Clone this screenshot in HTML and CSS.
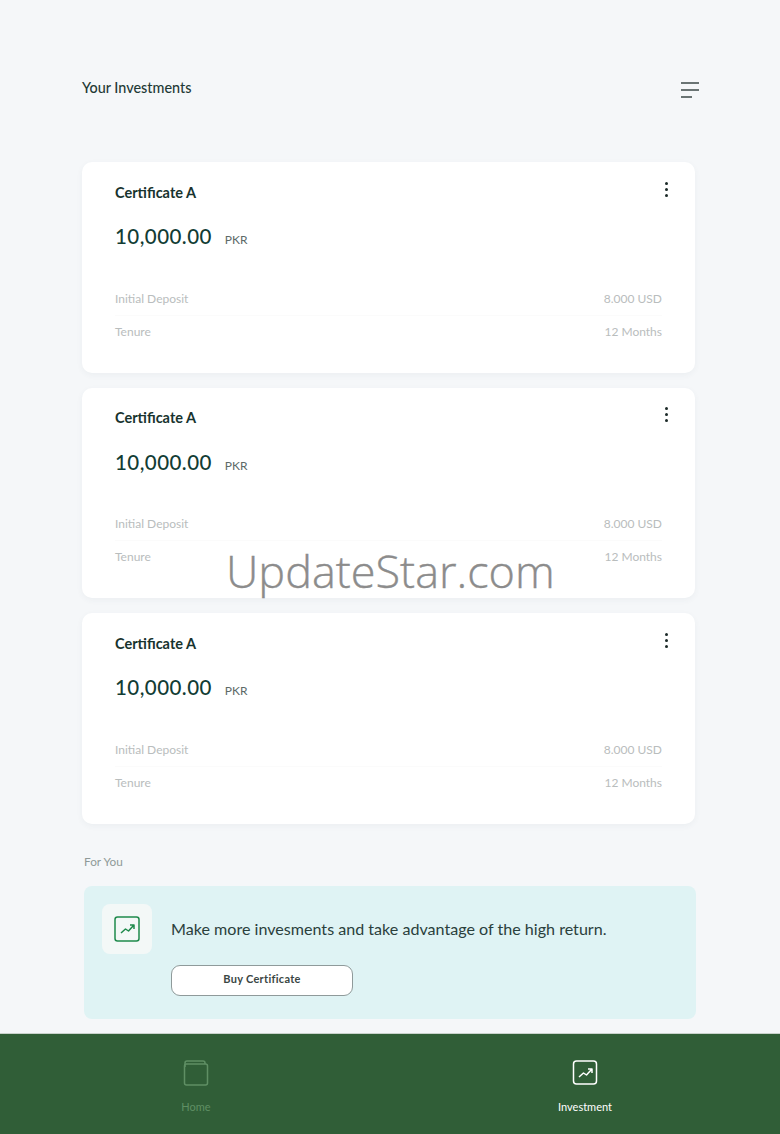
FILE: index.html
```html
<!DOCTYPE html>
<html lang="en">
  <head>
    <meta charset="UTF-8" />
    <meta name="viewport" content="width=device-width, initial-scale=1.0" />
    <title>Your Investments</title>
    <link rel="stylesheet" href="styles.css">
  </head>
  <body>
    <div class="page">
      <main class="content">
        <header class="top">
          <h1>Your Investments</h1>
          <svg class="menu" width="18" height="16" viewBox="0 0 18 16">
            <path d="M0 1h18M0 8h18M0 15h11" stroke="#3d4a48" stroke-width="1.4" fill="none" />
          </svg>
        </header>

        <div class="cards">
          <section class="card">
            <div class="card-head">
              <h2>Certificate A</h2>
              <span class="dots"><i></i><i></i><i></i></span>
            </div>
            <div class="amount"><strong>10,000.00</strong><span>PKR</span></div>
            <div class="row"><span>Initial Deposit</span><span>8.000 USD</span></div>
            <div class="row"><span>Tenure</span><span>12 Months</span></div>
          </section>
          <section class="card">
            <div class="card-head">
              <h2>Certificate A</h2>
              <span class="dots"><i></i><i></i><i></i></span>
            </div>
            <div class="amount"><strong>10,000.00</strong><span>PKR</span></div>
            <div class="row"><span>Initial Deposit</span><span>8.000 USD</span></div>
            <div class="row"><span>Tenure</span><span>12 Months</span></div>
          </section>
          <section class="card">
            <div class="card-head">
              <h2>Certificate A</h2>
              <span class="dots"><i></i><i></i><i></i></span>
            </div>
            <div class="amount"><strong>10,000.00</strong><span>PKR</span></div>
            <div class="row"><span>Initial Deposit</span><span>8.000 USD</span></div>
            <div class="row"><span>Tenure</span><span>12 Months</span></div>
          </section>
        </div>

        <p class="for-you">For You</p>
        <section class="promo">
          <div class="promo-icon">
            <svg width="26" height="26" viewBox="0 0 26 26" fill="none" stroke="#1f8a4c" stroke-width="1.5">
              <rect x="1" y="1" width="24" height="24" rx="2.5" />
              <path d="M7 17l4.500-4 3 2 5-5.500M16 9h4v4" stroke-linejoin="round" />
            </svg>
          </div>
          <div class="promo-body">
            <p>Make more invesments and take advantage of the high return.</p>
            <button type="button">Buy Certificate</button>
          </div>
        </section>
      </main>

      <nav class="tabs">
        <div class="tab">
          <svg width="26" height="26" viewBox="0 0 26 26" fill="none" stroke="#5f8f64" stroke-width="1.5">
            <rect x="1.500" y="4" width="23" height="21" rx="2" />
            <path d="M2 7V3a2 2 0 0 1 2-2h16a2 2 0 0 1 2 2v1" />
          </svg>
          <span>Home</span>
        </div>
        <div class="tab active">
          <svg width="26" height="26" viewBox="0 0 26 26" fill="none" stroke="#ffffff" stroke-width="1.5">
            <rect x="1.500" y="1" width="23" height="23" rx="3" />
            <path d="M7 17l4.500-4 3 2 5-5.500M16 9h4v4" stroke-linejoin="round" />
          </svg>
          <span>Investment</span>
        </div>
      </nav>

      <div class="watermark">UpdateStar.com</div>
    </div>
  </body>
</html>
```

FILE: styles.css
```css
* {
  box-sizing: border-box;
}
body {
  margin: 0;
  font-family: "Lato", "Liberation Sans", sans-serif;
  color: #17332e;
  background-color: #f5f7f9;
}
.page {
  position: relative;
  display: flex;
  flex-direction: column;
  justify-content: space-between;
  height: 1134px;
  overflow: hidden;
}
.content {
  padding: 79px 85px 0 82px;
}
.top {
  display: flex;
  align-items: center;
  justify-content: space-between;
  height: 18px;
  margin-right: -4px;
  margin-bottom: 65px;
}
h1 {
  margin: -1px 0 0;
  font-size: 14.400px;
  font-weight: 500;
  color: #1f3a36;
}
.menu {
  display: block;
  margin-top: 4px;
}

/* Cards */
.cards {
  display: flex;
  flex-direction: column;
  gap: 15px;
}
.card {
  height: 210.500px;
  padding: 21px 33px 0;
  background-color: #ffffff;
  border-radius: 10px;
  box-shadow: 0 2px 6px rgba(60, 80, 90, 0.05);
}
.card-head {
  display: flex;
  align-items: center;
  justify-content: space-between;
  height: 18px;
}
h2 {
  margin: 0;
  font-size: 14.500px;
  font-weight: 700;
  color: #17332e;
}
.dots {
  display: flex;
  flex-direction: column;
  gap: 3px;
  margin-right: -6px;
  margin-top: -6px;
}
.dots i {
  display: block;
  width: 3px;
  height: 3px;
  border-radius: 50%;
  background-color: #1c2a28;
}
.amount {
  display: flex;
  align-items: baseline;
  gap: 13px;
  margin-top: 23px;
  margin-bottom: 30px;
  height: 28px;
}
.amount strong {
  font-size: 20.500px;
  font-weight: 500;
  letter-spacing: 0.45px;
  color: #123c34;
}
.amount span {
  font-size: 12px;
  color: #5d6a68;
}
.row {
  display: flex;
  justify-content: space-between;
  align-items: center;
  height: 32.500px;
  font-size: 12px;
  color: #b9bdbd;
}
.row + .row {
  border-top: 1px solid #fbfbfb;
}

/* For you */
.for-you {
  margin: 31px 0 0 2px;
  font-size: 11.800px;
  line-height: 14px;
  color: #8f9a98;
}
.promo {
  display: flex;
  gap: 19px;
  width: 612px;
  height: 133px;
  margin: 17px 0 0 2px;
  padding: 18px 18px 0;
  background-color: #dff3f4;
  border-radius: 8px;
}
.promo-icon {
  display: flex;
  align-items: center;
  justify-content: center;
  flex: none;
  width: 50px;
  height: 50px;
  background-color: #f3f8f7;
  border-radius: 8px;
}
.promo-body p {
  margin: 15px 0 0;
  font-size: 16.100px;
  line-height: 20px;
  color: #2a403c;
}
.promo-body button {
  display: block;
  width: 182px;
  height: 31px;
  margin-top: 26px;
  font-family: inherit;
  font-size: 11px;
  font-weight: 700;
  letter-spacing: 0.3px;
  line-height: 26px;
  padding: 0 0 2px;
  color: #3a4644;
  background-color: #ffffff;
  border: 1.5px solid #8f9a9a;
  border-radius: 9px;
}

/* Bottom tabs */
.tabs {
  display: flex;
  justify-content: space-between;
  height: 101px;
  padding: 26px 135px 0 136px;
  background-color: #305e37;
  border-top: 1px solid #c9d2cb;
}
.tab {
  display: flex;
  flex-direction: column;
  align-items: center;
  width: 120px;
  gap: 14px;
  font-size: 11px;
  color: #5f8f64;
}
.tab.active {
  color: #ffffff;
}
.watermark {
  position: absolute;
  top: 541px;
  left: 226px;
  font-family: "Open Sans", sans-serif;
  font-size: 45px;
  font-weight: 300;
  line-height: 60px;
  color: #8c8c8c;
  -webkit-text-stroke: 0.4px #8c8c8c;
}
```
